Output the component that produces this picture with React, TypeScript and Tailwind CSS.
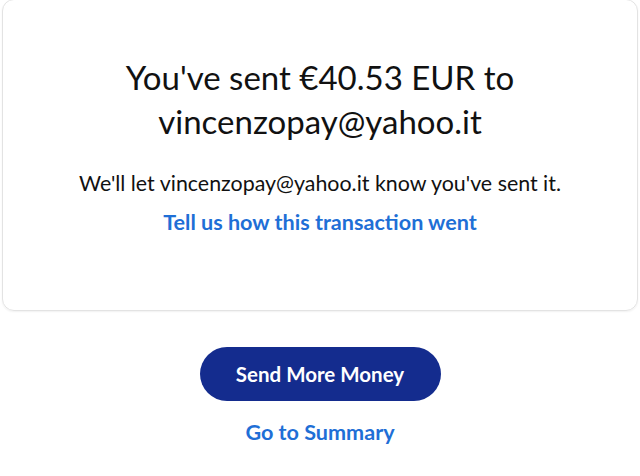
export default function App() {
  return (
    <div className="min-h-[476px] w-[640px] bg-white font-['Lato','Noto_Sans',sans-serif]">
      <div className="mx-[2px] -mt-px flex h-[312px] flex-col items-center rounded-[12px] border border-[#e3e3e3] pt-[55px] shadow-[0_1px_2px_rgba(0,0,0,0.06)]">
        <h1 className="text-center text-[33px] leading-[44px] text-[#111]">
          You've sent €40.53 EUR to
          <br />
          vincenzopay@yahoo.it
        </h1>
        <p className="mt-[26px] text-[21.4px] leading-[28px] text-[#111]">
          We'll let vincenzopay@yahoo.it know you've sent it.
        </p>
        <a className="mt-[11px] text-[21.6px] font-bold leading-[28px] text-[#1f6fd6]">
          Tell us how this transaction went
        </a>
      </div>
      <div className="flex flex-col items-center pt-[36px]">
        <button className="h-[54px] w-[241px] rounded-full bg-[#142c8e] text-[20.5px] font-bold text-white">
          Send More Money
        </button>
        <a className="mt-[17px] text-[21.6px] font-bold leading-[28px] text-[#1f6fd6]">
          Go to Summary
        </a>
      </div>
    </div>
  );
}
